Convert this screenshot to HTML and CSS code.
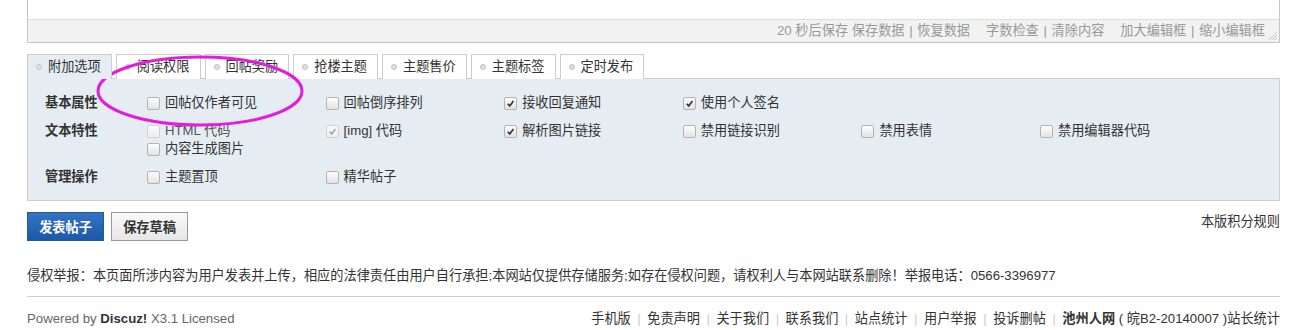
FILE: index.html
```html
<!DOCTYPE html>
<html lang="zh-CN">
<head>
<meta charset="utf-8">
<title>发表帖子</title>
<link rel="stylesheet" href="styles.css">
</head>
<body>
<div class="wrap">
  <div class="editor">
    <div class="edit-area"></div>
    <div class="edit-bar">
      <span class="grp">20 秒后保存 保存数据 <i>|</i> 恢复数据</span>
      <span class="grp">字数检查 <i>|</i> 清除内容</span>
      <span class="grp">加大编辑框 <i>|</i> 缩小编辑框</span>
      <svg class="grip" width="10" height="11" viewBox="0 0 10 11"><path d="M1 10 L9 2 M4 10 L9 5 M7 10 L9 8" stroke="#c8c8c8" stroke-width="1" fill="none"/></svg>
    </div>
  </div>

  <ul class="tabs">
    <li class="tab active"><span class="dot"></span>附加选项</li>
    <li class="tab"><span class="dot"></span>阅读权限</li>
    <li class="tab"><span class="dot"></span>回帖奖励</li>
    <li class="tab"><span class="dot"></span>抢楼主题</li>
    <li class="tab"><span class="dot"></span>主题售价</li>
    <li class="tab"><span class="dot"></span>主题标签</li>
    <li class="tab"><span class="dot"></span>定时发布</li>
  </ul>

  <div class="panel">
    <div class="row">
      <div class="lbl">基本属性</div>
      <div class="opt"><span class="cb"></span>回帖仅作者可见</div>
      <div class="opt"><span class="cb"></span>回帖倒序排列</div>
      <div class="opt"><span class="cb on"><svg viewBox="0 0 12 12"><path d="M3 6.2 L5.2 8.6 L9.2 3.4" stroke="#333" stroke-width="1.8" fill="none"/></svg></span>接收回复通知</div>
      <div class="opt"><span class="cb on"><svg viewBox="0 0 12 12"><path d="M3 6.2 L5.2 8.6 L9.2 3.4" stroke="#333" stroke-width="1.8" fill="none"/></svg></span>使用个人签名</div>
    </div>
    <div class="row">
      <div class="lbl">文本特性</div>
      <div class="opt multi">
        <div class="line dis"><span class="cb off"></span>HTML 代码</div>
        <div class="line"><span class="cb"></span>内容生成图片</div>
      </div>
      <div class="opt"><span class="cb off"><svg viewBox="0 0 12 12"><path d="M3 6.2 L5.2 8.6 L9.2 3.4" stroke="#9a9a9a" stroke-width="1.6" fill="none"/></svg></span>[img] 代码</div>
      <div class="opt"><span class="cb on"><svg viewBox="0 0 12 12"><path d="M3 6.2 L5.2 8.6 L9.2 3.4" stroke="#333" stroke-width="1.8" fill="none"/></svg></span>解析图片链接</div>
      <div class="opt"><span class="cb"></span>禁用链接识别</div>
      <div class="opt"><span class="cb"></span>禁用表情</div>
      <div class="opt"><span class="cb"></span>禁用编辑器代码</div>
    </div>
    <div class="row">
      <div class="lbl">管理操作</div>
      <div class="opt"><span class="cb"></span>主题置顶</div>
      <div class="opt"><span class="cb"></span>精华帖子</div>
    </div>
  </div>

  <div class="actions">
    <div class="btns">
      <button class="btn primary">发表帖子</button>
      <button class="btn">保存草稿</button>
    </div>
    <a class="rule">本版积分规则</a>
  </div>

  <p class="notice">侵权举报：本页面所涉内容为用户发表并上传，相应的法律责任由用户自行承担;本网站仅提供存储服务;如存在侵权问题，请权利人与本网站联系删除！举报电话：0566-3396977</p>

  <div class="footer">
    <div class="powered">Powered by <b>Discuz!</b> X3.1 Licensed</div>
    <div class="links">手机版<i>|</i>免责声明<i>|</i>关于我们<i>|</i>联系我们<i>|</i>站点统计<i>|</i>用户举报<i>|</i>投诉删帖<i>|</i><b>池州人网</b> ( 皖B2-20140007 )站长统计</div>
  </div>
</div>

<svg class="mark" width="230" height="90" viewBox="0 0 230 90"><ellipse cx="115" cy="45" rx="102" ry="34" stroke="#e11de0" stroke-width="3" fill="none"/></svg>
</body>
</html>
```

FILE: styles.css
```css
* { box-sizing: border-box; }
html, body { margin: 0; padding: 0; background: #fff; }
body {
  font-family: "Liberation Sans", "Noto Sans CJK SC", sans-serif;
  font-size: 13.2px;
  color: #333;
  line-height: 18px;
}
.wrap { width: 1253px; margin-left: 27px; }

.editor { border: 1px solid #c5c5c5; border-top: none; }
.edit-area { height: 19px; background: #fff; }
.edit-bar {
  height: 23px;
  background: #f2f2f2;
  border-top: 1px solid #dedede;
  display: flex;
  justify-content: flex-end;
  align-items: center;
  color: #999;
  padding-right: 1px;
}
.edit-bar .grp { margin-left: 16px; white-space: nowrap; }
.edit-bar i { font-style: normal; margin: 0 1px; }
.grip { margin-left: 3px; align-self: flex-end; margin-bottom: 1px; }

.tabs {
  list-style: none;
  margin: 11px 0 -1px 0;
  padding: 0;
  display: flex;
  gap: 4px;
  height: 25px;
}
.tab {
  height: 25px;
  padding: 0 10px 0 8px;
  border: 1px solid #cdcdcd;
  border-bottom: none;
  background: #fff;
  display: flex;
  align-items: center;
  color: #333;
  white-space: nowrap;
  position: relative;
}
.tab.active { background: #e5edf2; z-index: 1; }
.dot {
  width: 6px; height: 6px;
  border: 1px solid #c2c2c2;
  background: #e0e0e0;
  border-radius: 50%;
  margin-right: 6px;
  flex: none;
}

.panel {
  border: 1px solid #cdcdcd;
  background: #e5edf2;
  padding: 10px 0 9px 17px;
}
.row {
  display: grid;
  grid-template-columns: 102px repeat(6, 178.6px);
  padding: 5px 0;
}
.lbl { font-weight: bold; color: #333; }
.opt, .line { display: flex; align-items: center; white-space: nowrap; height: 18px; }
.multi { flex-direction: column; align-items: flex-start; height: auto; }
.line.dis { color: #555; }
.cb {
  width: 13px; height: 13px;
  border: 1px solid #b3b3b3;
  border-radius: 2px;
  background: linear-gradient(#fdfdfd, #e3e3e3);
  margin-right: 5px;
  display: inline-flex;
  align-items: center;
  justify-content: center;
  flex: none;
}
.cb svg { width: 11px; height: 11px; }
.cb.off { border-color: #d2d2d2; background: linear-gradient(#fafafa, #eeeeee); }

.actions {
  display: flex;
  justify-content: space-between;
  align-items: flex-start;
  margin-top: 11px;
}
.btns { display: flex; gap: 7px; }
.btn {
  height: 29px;
  width: 77px;
  font-family: inherit;
  font-size: 13.2px;
  font-weight: bold;
  border: 1px solid #999;
  background: linear-gradient(#fafafa, #e6e6e6);
  color: #333;
  padding: 0;
}
.btn.primary {
  border-color: #235994;
  background: linear-gradient(#3373c4, #1c5aa8);
  color: #fff;
}
.rule { margin-top: 1px; color: #333; }

.notice {
  margin: 26px 0 0 0;
  padding-bottom: 11px;
  border-bottom: 1px solid #cdcdcd;
  color: #333;
}
.footer {
  display: flex;
  justify-content: space-between;
  margin-top: 13px;
}
.powered { color: #666; }
.powered b { color: #333; }
.links { color: #333; }
.links i { font-style: normal; color: #ccc; margin: 0 6.5px; }
.links b { color: #333; }

.mark { position: absolute; left: 85px; top: 46px; pointer-events: none; }
```
